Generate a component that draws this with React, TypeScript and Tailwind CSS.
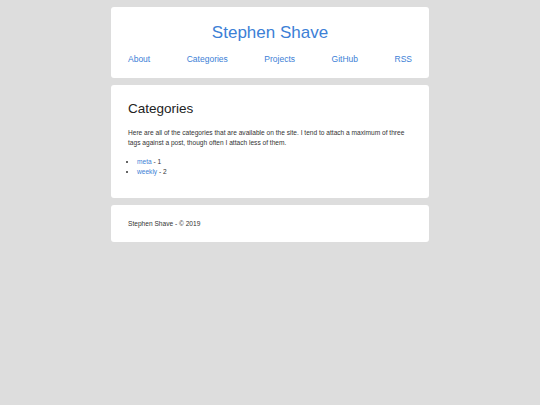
const NAV = ["About", "Categories", "Projects", "GitHub", "RSS"];

const CATEGORIES = [
  { name: "meta", count: 1 },
  { name: "weekly", count: 2 },
];

function Card({ children, className = "" }: { children: React.ReactNode; className?: string }) {
  return <div className={`rounded-[3px] bg-white px-[17px] ${className}`}>{children}</div>;
}

export default function App(): React.ReactElement {
  return (
    <div className="min-h-[405px] bg-[#dddddd] pt-[7px] font-['Liberation_Sans',Arial,sans-serif] text-[#222]">
      <div className="mx-auto flex w-[318px] flex-col gap-[7px]">
        <Card className="pt-[16px] pb-[14px]">
          <h1 className="text-center text-[17px] leading-[20px] text-[#3c80d6]">Stephen Shave</h1>
          <nav className="mt-[11px] flex justify-between">
            {NAV.map((n) => (
              <a key={n} href="#" className="text-[8.5px] leading-[10px] text-[#3c80d6]">
                {n}
              </a>
            ))}
          </nav>
        </Card>
        <Card className="pt-[16px] pb-[21px]">
          <h2 className="text-[13.5px] leading-[16px] text-[#222]">Categories</h2>
          <p className="mt-[11px] text-[6.6px] leading-[10px] text-[#333]">
            Here are all of the categories that are available on the site. I tend to attach a maximum of three
            tags against a post, though often I attach less of them.
          </p>
          <ul className="mt-[9px] list-disc pl-[9px] text-[6.6px] leading-[10px] text-[#333]">
            {CATEGORIES.map((c) => (
              <li key={c.name}>
                <a href="#" className="text-[#3c80d6]">
                  {c.name}
                </a>{" "}
                - {c.count}
              </li>
            ))}
          </ul>
        </Card>
        <Card className="pt-[14px] pb-[13px]">
          <p className="text-[6.6px] leading-[10px] text-[#333]">Stephen Shave - © 2019</p>
        </Card>
      </div>
    </div>
  );
}
